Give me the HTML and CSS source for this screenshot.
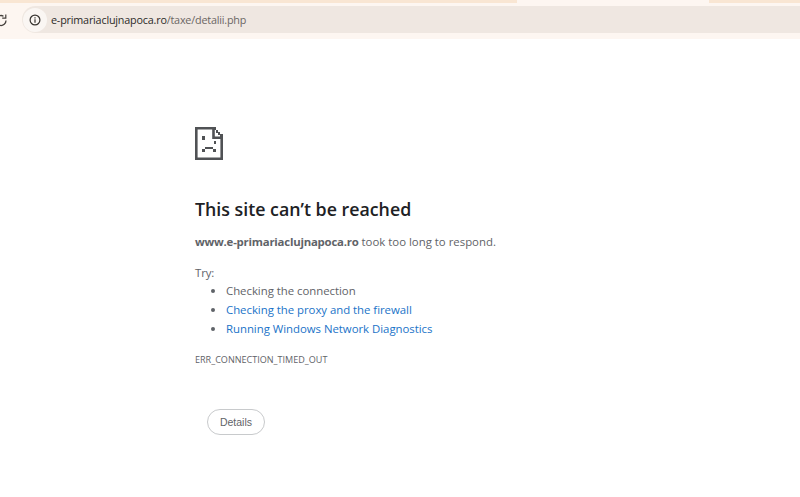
FILE: index.html
```html
<!DOCTYPE html>
<html lang="en">
<head>
<meta charset="utf-8">
<title>e-primariaclujnapoca.ro</title>
<link rel="stylesheet" href="styles.css">
</head>
<body>
<header class="chrome">
  <div class="tabstrip">
    <span class="tab-left"></span>
    <span class="tab-gap"></span>
    <span class="tab-right"></span>
  </div>
  <div class="toolbar">
    <svg class="reload" width="10" height="14" viewBox="0 0 10 14" aria-hidden="true">
      <path d="M6 7.5A5 5 0 1 1 3.5 3.2" fill="none" stroke="#45403c" stroke-width="1.3"/>
      <path d="M5.8 1.5V5.2H2.2" fill="none" stroke="#45403c" stroke-width="1.2"/>
    </svg>
    <div class="omnibox">
      <span class="info-chip">
        <svg width="12" height="12" viewBox="0 0 12 12" aria-hidden="true">
          <circle cx="6" cy="6" r="4.9" fill="none" stroke="#37332f" stroke-width="1.2"/>
          <path d="M6 5.2V8.8M6 3.2V4.4" stroke="#37332f" stroke-width="1.2"/>
        </svg>
      </span>
      <span class="url"><span class="host">e-primariaclujnapoca.ro</span>/taxe/detalii.php</span>
    </div>
  </div>
</header>
<main class="page">
  <svg class="sad-icon" width="28" height="33" viewBox="0 0 28 33" aria-hidden="true">
    <path fill="none" stroke="#505255" stroke-width="2.6" d="M1.3 1.3H18.5V10.7H26.7V31.7H1.3Z"/>
    <path fill="#505255" d="M19 0h2v3h-2zM21 3h2v3h-2zM23 5h2v3h-2zM25 7h3v3h-3z"/>
    <path fill="#505255" d="M7 9h3v4H7zM19 14h2v3h-2zM10 20h8v2h-8zM7 22h3v3H7zM18 22h3v3h-3z"/>
  </svg>
  <h1 class="title">This site can’t be reached</h1>
  <p class="summary"><strong>www.e-primariaclujnapoca.ro</strong> took too long to respond.</p>
  <p class="try">Try:</p>
  <ul class="suggestions">
    <li>Checking the connection</li>
    <li><a href="#">Checking the proxy and the firewall</a></li>
    <li><a href="#">Running Windows Network Diagnostics</a></li>
  </ul>
  <p class="code">ERR_CONNECTION_TIMED_OUT</p>
  <button class="details" type="button">Details</button>
</main>
</body>
</html>
```
FILE: styles.css
```css
* { box-sizing: border-box; }
html, body { margin: 0; height: 100%; background: #fff; overflow: hidden; }
body { font-family: "Open Sans", "Noto Sans", sans-serif; color: #5f6368; }

.chrome { background: #fdf6f1; height: 39px; display: flex; flex-direction: column; }
.tabstrip { height: 6px; display: flex; }
.tab-left { width: 517px; height: 3px; background: #f9e6d3; }
.tab-gap { width: 192px; }
.tab-right { flex: 1; height: 3px; background: #f9e6d3; }
.toolbar { height: 27px; display: flex; align-items: center; }
.reload { margin-right: 12px; flex: none; }
.omnibox { display: flex; align-items: center; flex: 1; height: 27px; padding-left: 1px; background: #efe7e1; border-radius: 14px 0 0 14px; }
.info-chip { width: 24px; height: 24px; border-radius: 50%; background: #faf6f3; display: flex; align-items: center; justify-content: center; margin-right: 4px; }
.url { font-size: 10.8px; letter-spacing: -0.2px; color: #6b6663; }
.host { color: #2c2a28; }

.page { padding: 88px 0 0 195px; }
.sad-icon { display: block; }
.title { margin: 36px 0 0; font-size: 17.8px; line-height: 26px; font-weight: 600; color: #202124; }
.summary { margin: 11px 0 0; font-size: 11.4px; line-height: 18px; }
.summary strong { font-weight: 700; letter-spacing: -0.22px; }
.try { margin: 13px 0 0; font-size: 11.4px; letter-spacing: -0.11px; line-height: 18px; }
.suggestions { margin: -1px 0 0; padding: 0 0 0 31px; font-size: 11.4px; letter-spacing: -0.03px; }
.suggestions li { line-height: 19px; }
.suggestions a { color: #1a73c8; text-decoration: none; }
.code { margin: 15px 0 0; font-size: 9.05px; line-height: 14px; }
.details { display: block; margin: 42px 0 0 12px; width: 58px; height: 26px; padding: 0; border: 1px solid #c8cacc; border-radius: 13px; background: #fff; font: 10.5px "Liberation Sans", sans-serif; color: #5f6368; }
```
